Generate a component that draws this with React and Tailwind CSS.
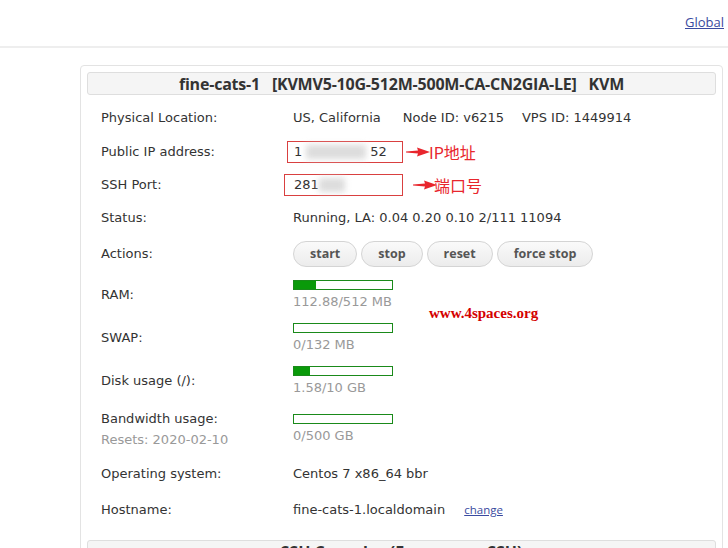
import { useState } from "react";

const Arrow = () => (
  <svg width="24" height="10" viewBox="0 0 24 10" className="shrink-0">
    <path d="M0 4.4 L12 3.6 L11 0.5 L24 5 L11 9.5 L12 6.4 L0 5.6 Z" fill="#e8262d" />
  </svg>
);

const Bar = ({ pct, text }) => (
  <div className="flex flex-col">
    <div className="w-[100px] h-[10px] border border-[#1a8a1a] bg-white">
      <div className="h-full bg-[#0a9a0a]" style={{ width: pct + "%" }} />
    </div>
    <span className="text-[#999] mt-[4px] leading-[16px]">{text}</span>
  </div>
);

const Row = ({ label, h, children }) => (
  <div className={"flex items-center " + h}>
    <div className="w-[206px] pl-[14px] shrink-0">{label}</div>
    <div className="flex items-center">{children}</div>
  </div>
);

const Btn = ({ children }) => (
  <button className="h-[26px] px-[16px] rounded-full border border-[#d4d4d4] bg-gradient-to-b from-[#fafafa] to-[#ececec] text-[#555] font-bold text-[12.5px]">
    {children}
  </button>
);

const App = () => {
  const [host] = useState("fine-cats-1.localdomain");

  return (
    <div className="w-[728px] h-[548px] overflow-hidden bg-white text-[#333] text-[13px]" style={{ fontFamily: '"DejaVu Sans", Verdana, sans-serif' }}>
      <div className="h-[48px] border-b-2 border-[#eeeeee] flex justify-end items-start pt-[13px]">
        <a href="#" className="underline text-[#3a4aa0] text-[13px] mr-[4px]" style={{ fontFamily: '"Open Sans", sans-serif' }}>Global</a>
      </div>

      <div className="pl-[80px] pt-[17px]">
        <div className="w-[643px] border border-[#e3e3e3] rounded-[4px] p-[6px] pb-0">
          <div className="h-[23px] border border-[#dedede] rounded-[3px] bg-[#f5f5f5] flex items-center justify-center font-bold text-[16px] text-[#333] whitespace-pre tracking-[-0.2px]" style={{ fontFamily: '"Open Sans", sans-serif' }}>
            {"fine-cats-1   [KVMV5-10G-512M-500M-CA-CN2GIA-LE]   KVM"}
          </div>

          <div className="mt-[6px]">
            <Row label="Physical Location:" h="h-[34px]">
              <span>US, California</span>
              <span className="ml-[22px]">Node ID: v6215</span>
              <span className="ml-[18px]">VPS ID: 1449914</span>
            </Row>

            <Row label="Public IP address:" h="h-[33px]">
              <div className="ml-[-6px] w-[116px] h-[22px] border border-[#d94040] flex items-center pl-[6px]">
                <span>1</span>
                <span className="inline-block w-[60px] h-[14px] bg-[#dcdcdc] blur-[3px] mx-[4px]" />
                <span>52</span>
              </div>
              <div className="ml-[3px] flex items-center">
                <Arrow />
                <span className="text-[#e8262d] text-[16px] ml-[-1px]" style={{ fontFamily: '"Noto Sans CJK SC", sans-serif' }}>IP地址</span>
              </div>
            </Row>

            <Row label="SSH Port:" h="h-[33px]">
              <div className="ml-[-9px] w-[119px] h-[22px] border border-[#d94040] flex items-center pl-[9px]">
                <span>281</span>
                <span className="inline-block w-[26px] h-[14px] bg-[#dcdcdc] blur-[3px]" />
              </div>
              <div className="ml-[10px] flex items-center">
                <Arrow />
                <span className="text-[#e8262d] text-[16px] ml-[-3px]" style={{ fontFamily: '"Noto Sans CJK SC", sans-serif' }}>端口号</span>
              </div>
            </Row>

            <Row label="Status:" h="h-[34px]">
              <span>Running, LA: 0.04 0.20 0.10 2/111 11094</span>
            </Row>

            <Row label="Actions:" h="h-[38px]">
              <div className="flex gap-[4px]" style={{ fontFamily: '"Open Sans", sans-serif' }}>
                <Btn>start</Btn>
                <Btn>stop</Btn>
                <Btn>reset</Btn>
                <Btn>force stop</Btn>
              </div>
            </Row>

            <Row label="RAM:" h="h-[43px]">
              <Bar pct={22} text="112.88/512 MB" />
              <span className="ml-[36px] mt-[38px] text-[#d40000] font-bold text-[15px]" style={{ fontFamily: '"Liberation Serif", serif' }}>www.4spaces.org</span>
            </Row>

            <Row label="SWAP:" h="h-[44px]">
              <Bar pct={0} text="0/132 MB" />
            </Row>

            <Row label="Disk usage (/):" h="h-[42px]">
              <Bar pct={16} text="1.58/10 GB" />
            </Row>

            <div className="flex items-center h-[55px]">
              <div className="w-[206px] pl-[14px] shrink-0 flex flex-col gap-[5px]">
                <span className="leading-[16px]">Bandwidth usage:</span>
                <span className="leading-[16px] text-[#999]">Resets: 2020-02-10</span>
              </div>
              <div className="mt-[-2px]">
                <Bar pct={0} text="0/500 GB" />
              </div>
            </div>

            <Row label="Operating system:" h="h-[34px]">
              <span>Centos 7 x86_64 bbr</span>
            </Row>

            <Row label="Hostname:" h="h-[38px]">
              <span>{host}</span>
              <a href="#" className="ml-[19px] underline text-[#3a4aa0] text-[11.5px]" style={{ fontFamily: '"Open Sans", sans-serif' }}>change</a>
            </Row>
          </div>

          <div className="mt-[11px] h-[23px] border border-[#dedede] rounded-[3px] bg-[#f5f5f5] flex items-center justify-center font-bold text-[16px] whitespace-pre" style={{ fontFamily: '"Open Sans", sans-serif' }}>
            {"SSH Console   (Emergency SSH)"}
          </div>
        </div>
      </div>
    </div>
  );
};

export default App;
